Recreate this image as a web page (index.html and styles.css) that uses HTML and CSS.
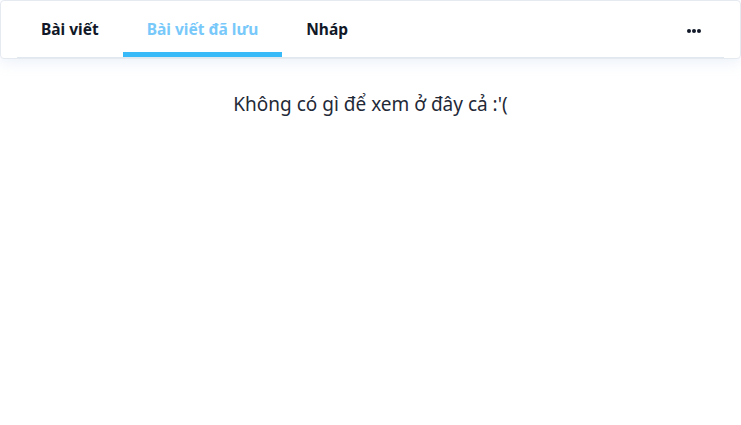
FILE: index.html
```html
<!DOCTYPE html>
<html lang="vi">
<head>
<meta charset="utf-8">
<title>Bài viết</title>
<link rel="stylesheet" href="styles.css">
</head>
<body>
  <div class="card">
    <nav class="tabs">
      <a class="tab">Bài viết</a>
      <a class="tab active">Bài viết đã lưu</a>
      <a class="tab">Nháp</a>
      <span class="spacer"></span>
      <button class="more" aria-label="Thêm">
        <svg width="14" height="4" viewBox="0 0 14 4"><circle cx="2" cy="2" r="2"/><circle cx="7" cy="2" r="2"/><circle cx="12" cy="2" r="2"/></svg>
      </button>
    </nav>
  </div>
  <p class="empty">Không có gì để xem ở đây cả :'(</p>
</body>
</html>
```
FILE: styles.css
```css
html, body {
  margin: 0;
  padding: 0;
  background: #ffffff;
  font-family: "Noto Sans", "Open Sans", sans-serif;
  color: #1f2937;
}

.card {
  background: #fff;
  border: 1px solid #e5e9f0;
  border-radius: 4px;
  padding: 0 16px 0 16px;
  box-shadow: 0 4px 14px rgba(148, 180, 220, 0.18);
}

.tabs {
  display: flex;
  align-items: center;
  height: 56px;
  border-bottom: 1px solid #e2e8f0;
}

.tab {
  display: flex;
  align-items: center;
  box-sizing: border-box;
  height: 56px;
  padding: 5px 24px 0 24px;
  border-bottom: 5px solid transparent;
  font-size: 15.5px;
  font-weight: 700;
  color: #111827;
  cursor: pointer;
}

.tab.active {
  color: #78c9fa;
  border-bottom-color: #38b9f8;
}

.spacer {
  flex: 1;
}

.more {
  display: flex;
  align-items: center;
  justify-content: center;
  border: 0;
  background: none;
  padding: 0;
  margin-right: 23px;
  margin-top: 3px;
  width: 14px;
  height: 4px;
  fill: #111827;
}

.empty {
  margin: 31px 0 0 0;
  text-align: center;
  font-size: 19px;
  line-height: 28px;
  color: #1f2937;
}
```
